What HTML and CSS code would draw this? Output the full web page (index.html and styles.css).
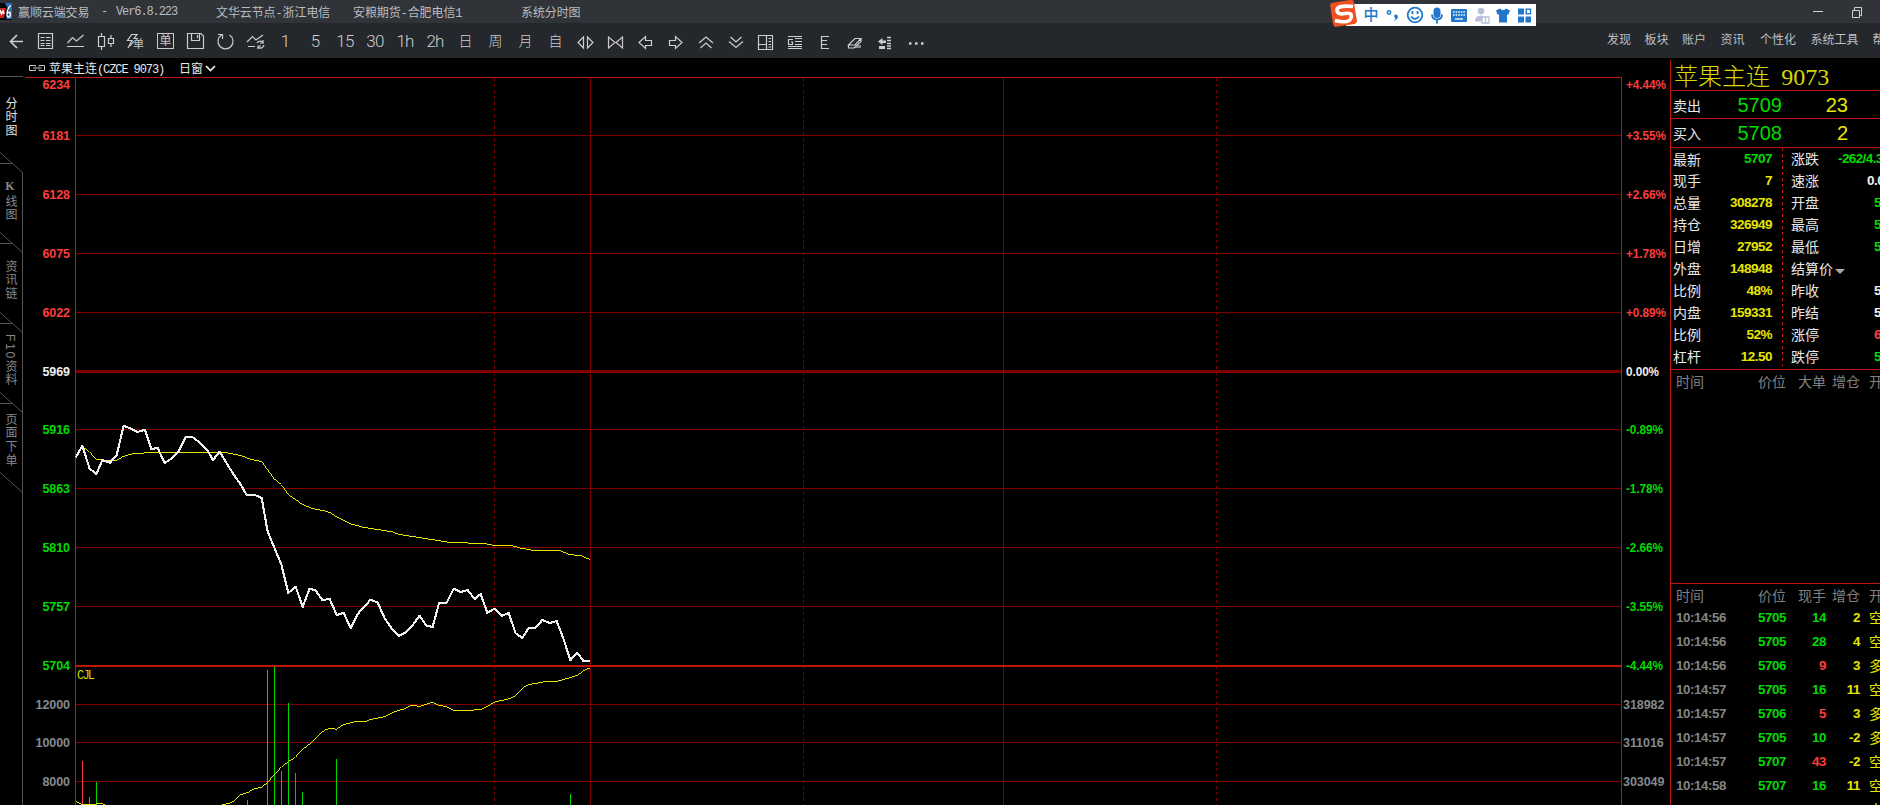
FILE: index.html
```html
<!DOCTYPE html>
<html lang="zh-CN">
<head>
<meta charset="utf-8">
<title>赢顺云端交易</title>
<link rel="stylesheet" href="styles.css">
</head>
<body>
<div class="app">
  <header class="titlebar">
    <svg class="app-logo" width="12" height="17" viewBox="0 0 12 17"><rect width="12" height="17" fill="#05070b"/><path d="M5 0H12V16H6L9 8Z" fill="#2d6db5"/><path d="M0 5H6L4 15H0Z" fill="#c9232c"/><path d="M0 7L1.500 11L3 8L4 11M10.500 2.500Q7 6 7 11.500Q7 14.500 9 14T10 9.500Q8 8.500 7 11" fill="none" stroke="#fff" stroke-width="1.400"/></svg>
    <span class="t-app">赢顺云端交易</span>
    <span class="t-dash">-</span>
    <span class="t-ver mono">Ver6.8.223</span>
    <span class="t-node">文华云节点-浙江电信</span>
    <span class="t-broker">安粮期货-合肥电信1</span>
    <span class="t-page">系统分时图</span>
    <svg class="win-buttons" width="60" height="23" viewBox="1810 0 60 23"><path d="M1813 11.500H1823M1852.500 10.500H1859.500V17.500H1852.500ZM1854.500 10V7.500H1861.500V15.500H1860" fill="none" stroke="#d0d0d0"/></svg>
  </header>

  <nav class="toolbar">
    <svg class="ico" viewBox="0 0 30 35"><path d="M23 18.500H10.500M17 12L10.500 18.500L17 25" stroke-width="1.700"/></svg>
    <svg class="ico" viewBox="0 0 30 35"><path d="M8.500 10.500H22.500V25.500H8.500ZM10.500 14.500H14.500M16 14.500H20.500M10.500 17.500H14.500M16 17.500H20.500M10.500 20.500H14.500M16 20.500H20.500M10.500 22.500H14.500M16 22.500H20.500"/></svg>
    <svg class="ico" viewBox="0 0 30 35"><path d="M7.500 20L12.500 14.500L16.500 18L23.500 12M7 23.500H24"/></svg>
    <svg class="ico" viewBox="0 0 30 35"><path d="M8.500 13.500H14.500V23.500H8.500ZM11.500 10V13M11.500 24V27M18.500 15.500H23.500V20.500H18.500ZM21 12V15M21 21V24"/></svg>
    <div class="ico combo"><svg viewBox="0 0 30 35"><path d="M11 11.500H17L14 15.500H18M12 11L7.500 17.500H12L8 25M14 18L10 23"/></svg><span>单</span></div>
    <div class="ico boxed"><span>单</span></div>
    <svg class="ico" viewBox="0 0 30 35"><path d="M7.500 10.500H21L23.500 13V25.500H7.500ZM11.500 11V17.500H19.500V11M17.500 12V15"/></svg>
    <svg class="ico" viewBox="0 0 30 35"><path d="M19.500 12A7.500 7.500 0 1 1 11.500 12M8 11.500H12.500V16"/></svg>
    <svg class="ico" viewBox="0 0 30 35"><path d="M7 19L12.500 13.500L16 17L23 12M8 23.500H15M17 20A3.500 3.500 0 0 1 23 19.500V17M24 22A3.500 3.500 0 0 1 18 24V26M20 20H23M18 23H21"/></svg>
    <span class="per">1</span><span class="per">5</span><span class="per">15</span><span class="per">30</span><span class="per">1h</span><span class="per">2h</span>
    <span class="per cn">日</span><span class="per cn">周</span><span class="per cn">月</span><span class="per cn">自</span>
    <svg class="ico" viewBox="0 0 30 35"><path d="M13.500 14V25L8 19.500ZM17.500 14V25L23 19.500Z"/></svg>
    <svg class="ico" viewBox="0 0 30 35"><path d="M8.500 14V25L15 19.500ZM22.500 14V25L16 19.500Z"/></svg>
    <svg class="ico" viewBox="0 0 30 35"><path d="M9 19.500L15.500 13.500V17.500H21.500V22.500H15.500V25.500Z"/></svg>
    <svg class="ico" viewBox="0 0 30 35"><path d="M22 19.500L15.500 13.500V17.500H9.500V22.500H15.500V25.500Z"/></svg>
    <svg class="ico" viewBox="0 0 30 35"><path d="M9 20L16 14L23 20M10.500 25L16 20L21.500 25"/></svg>
    <svg class="ico" viewBox="0 0 30 35"><path d="M10.500 14L16 19L21.500 14M9 18.500L16 24.500L23 18.500"/></svg>
    <svg class="ico" viewBox="0 0 30 35"><path d="M8.500 12.500H22.500V26.500H8.500ZM16.500 13V26M9 21.500H16M18.500 15.500H21M18.500 18.500H21M18.500 21.500H21M18.500 24H21"/></svg>
    <svg class="ico" viewBox="0 0 30 35"><path d="M8 13.500H22M15 15.500H22M15 18.500H22M15 21.500H22M8 23.500H22M8 25.500H22M13 16.500H8.500V21.500H12.500V19H11"/></svg>
    <svg class="ico" viewBox="0 0 30 35"><path d="M19 13.500H11.500V25.500H19M12 17.500H17M12 21.500H17"/></svg>
    <svg class="ico" viewBox="0 0 30 35"><path d="M16 22H21V25H14Z" fill="#888" stroke="none"/><path d="M8.500 22L15 15.500H21L15 22ZM8.500 22V25H14L21 18.500V15.500"/></svg>
    <svg class="ico" viewBox="0 0 30 35"><path d="M8 18.500L12.500 15V17.500H16V20H12.500V22ZM9 23H15V26H9Z" fill="#ccc" stroke="none"/><path d="M17 14.500H21M17 17.500H21M17 20.500H21M17 23H21M17 25.500H21" stroke-width="1.600"/></svg>
    <svg class="ico" viewBox="0 0 30 35"><path d="M9 20.500H11.500M15 20.500H17.500M21 20.500H23.500" stroke-width="2.300"/></svg>
    <div class="menu">
      <span class="m1">发现</span><span class="m2">板块</span><span class="m3">账户</span><span class="m4">资讯</span><span class="m5">个性化</span><span class="m6">系统工具</span><span>帮</span>
    </div>
  </nav>

  <div class="main">
    <aside class="sidebar">
      <svg class="tab-lines" width="25" height="747" viewBox="0 58 25 747"><path d="M0 76.500H23M22.500 172.500V805M0 152.500L22.500 172.500M0 163.500H12M0 232.500L22.500 252.500M0 243.500H12M0 312.500L22.500 332.500M0 323.500H12M0 392.500L22.500 412.500M0 403.500H12M0 472.500L22.500 492.500"/></svg>
      <div class="tab first">分时图</div>
      <div class="tab"><span class="up">K</span>线图</div>
      <div class="tab">资讯链</div>
      <div class="tab">F10资料</div>
      <div class="tab">页面下单</div>
    </aside>

    <section class="chart">
      <div class="chart-head">
        <svg width="17" height="9" viewBox="0 0 17 9"><path d="M6.500 3.500V2.500H.5V7.500H6.500V6.500M10 3.500V2.500H15.500V7.500H10V6.500M4 5H12.500" fill="none" stroke="#ccc"/></svg>
        <span class="inst">苹果主连<span class="mono">(CZCE 9073)</span></span>
        <span>日窗</span>
        <svg width="12" height="8" viewBox="0 0 12 8"><path d="M1 2L5.500 6.500L10 2" fill="none" stroke="#eee" stroke-width="1.700"/></svg>
      </div>
      <svg class="plot" width="1645" height="728" viewBox="25 77 1645 728">
        <g class="grid">
          <path d="M76 135.500H1621M76 194.500H1621M76 253.500H1621M76 312.500H1621M76 429.500H1621M76 488.500H1621M76 547.500H1621M76 606.500H1621M76 704.500H1621M76 742.500H1621M76 781.500H1621M590.500 78V805M1003.500 78V805"/>
          <path class="thick" d="M76 371.500H1621"/>
          <path class="dash" d="M494.500 78V805M803.500 78V805M1216.500 78V805"/>
        </g>
        <path class="frame" d="M25 77.500H1622M75.500 77V805M1621.500 77V805"/>
        <path class="split" d="M76 666H1621"/>
        <path class="down" d="M89.500 797V805M96.500 782V805M247.500 800V805M267.500 670V805M274.500 667V805M281.500 771V805M288.500 703V805M302.500 792V805M336.500 759V805M570.500 794V805"/>
        <path class="up-bar" d="M82.500 761V805M295.500 773V805"/>
        <g class="avg">
          <polyline transform="translate(60 400) scale(.33333)" points="67,140 88,155 109,178 130,181 170,181 191,169 215,162 265,158 500,158 545,167 565,176 605,185 622,208 643,237 664,254 685,284 727,313 755,325 800,334 810,338 830,351 840,356"/>
          <polyline transform="translate(340 480) scale(.33333)" points="0,116 11,121 30,131 70,142 155,155 175,163 240,173 335,188 430,190 460,196 515,197 545,205 580,211 660,212 688,223 725,228 751,239"/>
          <polyline transform="translate(0 640) scale(.33333)" points="227,484 245,493 257,494 280,493 305,490 315,495 340,505 640,505 670,493 685,491 703,482 722,464 742,458 765,446 785,441 803,427 822,405 845,380 868,363 886,352 905,330 930,311 955,286 975,270 992,265 1010,268 1020,260 1030,254 1065,245 1080,244"/>
          <polyline transform="translate(340 640) scale(.33333)" points="60,244 77,244 90,239 130,231 170,213 195,206 215,196 240,199 258,193 278,187 295,196 320,200 340,211 390,211 425,208 465,186 505,177 525,168 547,145 565,134 615,125 655,123 710,107 732,92 751,83"/>
        </g>
        <g class="price">
          <polyline transform="translate(60 400) scale(.33333)" points="47,172 67,138 89,206 109,222 127,180 150,188 170,165 191,77 212,86 232,96 255,89 274,147 293,144 314,189 335,175 356,153 377,111 398,112 419,127 440,148 459,180 479,155 500,190 520,222 541,252 560,285 585,285 605,294 623,395 643,443 664,493 685,579 707,560 728,621 748,567 766,570 787,600 809,597 830,645 851,638"/>
          <polyline transform="translate(340 480) scale(.33333)" points="-10,405 11,399 32,444 53,402 92,359 113,368 134,415 155,445 176,468 197,457 219,434 239,407 258,436 278,441 297,370 320,368 341,326 362,336 383,330 404,357 422,342 442,399 463,386 485,408 506,399 527,460 547,474 566,444 587,443 607,420 629,429 650,423 671,478 691,541 712,518 730,543 751,543"/>
        </g>
        <text class="cjl" x="77" y="679" textLength="18">CJL</text>
        <g class="axis left">
          <g class="red"><text x="70" y="89">6234</text><text x="70" y="140">6181</text><text x="70" y="199">6128</text><text x="70" y="258">6075</text><text x="70" y="317">6022</text></g>
          <text class="white" x="70" y="376">5969</text>
          <g class="green"><text x="70" y="434">5916</text><text x="70" y="493">5863</text><text x="70" y="552">5810</text><text x="70" y="611">5757</text><text x="70" y="670">5704</text></g>
          <g class="gray"><text x="70" y="709">12000</text><text x="70" y="747">10000</text><text x="70" y="786">8000</text></g>
        </g>
        <g class="axis">
          <g class="red"><text x="1626" y="89" textLength="40" lengthAdjust="spacingAndGlyphs">+4.44%</text><text x="1626" y="140" textLength="40" lengthAdjust="spacingAndGlyphs">+3.55%</text><text x="1626" y="199" textLength="40" lengthAdjust="spacingAndGlyphs">+2.66%</text><text x="1626" y="258" textLength="40" lengthAdjust="spacingAndGlyphs">+1.78%</text><text x="1626" y="317" textLength="40" lengthAdjust="spacingAndGlyphs">+0.89%</text></g>
          <text class="white" x="1626" y="376" textLength="33" lengthAdjust="spacingAndGlyphs">0.00%</text>
          <g class="green"><text x="1626" y="434" textLength="37" lengthAdjust="spacingAndGlyphs">-0.89%</text><text x="1626" y="493" textLength="37" lengthAdjust="spacingAndGlyphs">-1.78%</text><text x="1626" y="552" textLength="37" lengthAdjust="spacingAndGlyphs">-2.66%</text><text x="1626" y="611" textLength="37" lengthAdjust="spacingAndGlyphs">-3.55%</text><text x="1626" y="670" textLength="37" lengthAdjust="spacingAndGlyphs">-4.44%</text></g>
          <g class="gray"><text x="1623" y="709">318982</text><text x="1623" y="747">311016</text><text x="1623" y="786">303049</text></g>
        </g>
      </svg>
    </section>

    <aside class="quote">
      <h1>苹果主连 <span>9073</span></h1>
      <div class="book"><span>卖出</span><b class="green">5709</b><b class="yellow">23</b></div>
      <div class="book"><span>买入</span><b class="green">5708</b><b class="yellow">2</b></div>
      <div class="stats">
        <div class="col a">
          <div class="newest"><span>最新</span><b class="green">5707</b></div>
          <div><span>现手</span><b>7</b></div>
          <div><span>总量</span><b>308278</b></div>
          <div><span>持仓</span><b>326949</b></div>
          <div><span>日增</span><b>27952</b></div>
          <div><span>外盘</span><b>148948</b></div>
          <div><span>比例</span><b>48%</b></div>
          <div><span>内盘</span><b>159331</b></div>
          <div><span>比例</span><b>52%</b></div>
          <div><span>杠杆</span><b>12.50</b></div>
        </div>
        <div class="col b">
          <div class="wide"><span>涨跌</span><b class="green">-262/4.3</b></div>
          <div class="mid"><span>速涨</span><b class="white">0.0</b></div>
          <div><span>开盘</span><b class="green">5</b></div>
          <div><span>最高</span><b class="green">5</b></div>
          <div><span>最低</span><b class="green">5</b></div>
          <div><span>结算价</span><i class="caret"></i></div>
          <div><span>昨收</span><b class="white">5</b></div>
          <div><span>昨结</span><b class="white">5</b></div>
          <div><span>涨停</span><b class="red">6</b></div>
          <div><span>跌停</span><b class="green">5</b></div>
        </div>
      </div>
      <div class="big-orders"><div class="row head"><span>时间</span><span>价位</span><span>大单</span><span>增仓</span><span>开</span></div></div>
      <div class="ticks">
        <div class="row head"><span>时间</span><span>价位</span><span>现手</span><span>增仓</span><span>开</span></div>
        <div class="row"><span>10:14:56</span><span>5705</span><span>14</span><span>2</span><span>空</span></div>
        <div class="row"><span>10:14:56</span><span>5705</span><span>28</span><span>4</span><span>空</span></div>
        <div class="row"><span>10:14:56</span><span>5706</span><span class="red">9</span><span>3</span><span>多</span></div>
        <div class="row"><span>10:14:57</span><span>5705</span><span>16</span><span>11</span><span>空</span></div>
        <div class="row"><span>10:14:57</span><span>5706</span><span class="red">5</span><span>3</span><span>多</span></div>
        <div class="row"><span>10:14:57</span><span>5705</span><span>10</span><span>-2</span><span>多</span></div>
        <div class="row"><span>10:14:57</span><span>5707</span><span class="red">43</span><span>-2</span><span>空</span></div>
        <div class="row"><span>10:14:58</span><span>5707</span><span>16</span><span>11</span><span>空</span></div>
        <div class="row"><span>10:14:58</span><span>5707</span><span>5</span><span>4</span><span>空</span></div>
      </div>
    </aside>
  </div>

  <div class="ime">
    <svg width="210" height="32" viewBox="1328 0 210 32">
      <rect x="1346" y="4" width="190" height="22" fill="#fff"/>
      <rect x="1331.500" y="1" width="24" height="24.500" rx="3" transform="rotate(-9 1344 13)" fill="#ef5020"/>
      <path d="M1353 6.500Q1337 5 1337 10T1345 13.500T1351 18T1335 20.500" fill="none" stroke="#fff" stroke-width="3.600"/>
      <g transform="translate(0 -1.500)">
      <g fill="none" stroke="#2077cc" stroke-width="1.800">
        <circle cx="1389" cy="14" r="1.700" stroke-width="1.500"/>
        <circle cx="1415" cy="16.500" r="7.300"/><path d="M1411 18Q1415 23 1419 18M1412.500 12.500V15.500M1417.500 12.500V15.500"/>
        <path d="M1432 16Q1432 21 1437 21T1442 16M1437 21V25"/>
      </g>
      <g fill="#2077cc">
        <path d="M1395 16Q1399 16 1397.500 20L1394 22.500L1395.500 19.500Q1393 18 1395 16Z"/>
        <rect x="1433.500" y="9" width="7" height="10.500" rx="3.500"/>
        <rect x="1451" y="10.500" width="16" height="13" rx="1"/>
        <path d="M1496 12L1500 10Q1503 13 1506 10L1510 12L1508.500 16H1507V24H1499V16H1497.500Z"/>
        <path d="M1518 10H1524V16H1518ZM1518 18H1524V24H1518ZM1525.500 18H1531V24H1525.500Z"/>
      </g>
      <rect x="1526.200" y="10.700" width="4.300" height="4.600" fill="none" stroke="#2077cc" stroke-width="1.400"/>
      <path d="M1453 13.500H1465M1453 16.500H1465" stroke="#fff" stroke-width="1.300" stroke-dasharray="1.500 1.100"/><path d="M1455 20.500H1463" stroke="#fff" stroke-width="1.300"/>
      <g fill="#b7c0d6"><circle cx="1481" cy="12.500" r="3.300"/><path d="M1475 23Q1475 17 1481 17H1483V23Z"/></g>
      <path d="M1482 18.500H1485.500V24.500M1482 18.500V24.500H1489V18.500H1485.500" fill="#fff" stroke="#b7c0d6" stroke-width="1.300"/>
      <text x="1363.500" y="21.500" class="ime-cn">中</text>
      </g>
    </svg>
  </div>
</div>
</body>
</html>
```
FILE: styles.css
```css
* { box-sizing: border-box; }
body { margin: 0; background: #000; overflow: hidden; }
.app {
  width: 1880px; height: 805px; overflow: hidden; position: relative;
  display: flex; flex-direction: column;
  font-family: "Liberation Sans", "Noto Sans CJK SC", sans-serif;
  font-size: 12px; color: #c8c8c8;
}
span, b, h1, text { white-space: nowrap; }
.mono { font-family: "Liberation Mono", monospace; font-size: 12px; letter-spacing: -1.1px; }
.red { color: #ff3c3c; fill: #ff3c3c; }
.green { color: #00dc00; fill: #00dc00; }
.yellow { color: #e6e600; }
.white { color: #f0f0f0; fill: #f0f0f0; }
.gray { fill: #848a8e; }

.titlebar { flex: 0 0 23px; height: 23px; background: #303338; display: flex; align-items: center; color: #b9bcc0; }
.titlebar > span { font-family: "Liberation Mono", "Noto Sans CJK SC", monospace; letter-spacing: -.1px; }
.app-logo { align-self: flex-start; margin-top: 3px; }
.t-app { margin-left: 6px; width: 83px; }
.t-dash { width: 15px; }
.titlebar .t-ver { width: 100px; letter-spacing: -1.1px; }
.t-node { width: 137px; }
.t-broker { width: 168px; }
.win-buttons { margin: 0 10px 0 auto; }

.toolbar { flex: 0 0 35px; height: 35px; min-height: 0; background: #24272b; display: flex; }
.ico, .per { flex: 0 0 30px; width: 30px; height: 35px; }
svg.ico, .combo svg { fill: none; stroke: #cdcdcd; stroke-width: 1.2; }
.combo { position: relative; }
.combo span { position: absolute; left: 13px; top: 13px; font-size: 11px; line-height: 16px; }
.boxed { display: flex; align-items: flex-start; justify-content: center; padding: 10px 0 0 1px; }
.boxed span { width: 17px; height: 16px; border: 1px solid #cdcdcd; font-size: 12px; line-height: 14px; text-align: center; }
.per { text-align: center; padding: 2px 0 0 0; font: 300 17px/33px Roboto, "Noto Sans CJK SC", sans-serif; letter-spacing: -.8px; color: #cdcdcd; }
.per.cn { font-size: 14px; line-height: 33px; }
.menu { display: flex; margin-left: auto; width: 273px; height: 35px; padding-top: 1px; line-height: 33px; overflow: hidden; color: #bdbfc1; }
.menu span { flex: none; }
.m1, .m2 { width: 37.5px; }
.m3 { width: 38.5px; }
.m4 { width: 39.5px; }
.m5 { width: 50.5px; }
.m6 { width: 62px; }

.main { flex: 0 0 747px; height: 747px; display: flex; min-height: 0; }
.sidebar { flex: 0 0 25px; position: relative; padding-top: 18px; }
.tab-lines { position: absolute; left: 0; top: 0; fill: none; stroke: #555; }
.tab { height: 80px; width: 19px; padding-bottom: 4px; display: flex; align-items: center; justify-content: center; writing-mode: vertical-rl; color: #888; letter-spacing: 1.8px; line-height: 19px; }
.tab.first { height: 87px; color: #e0e0e0; }
.up { text-orientation: upright; font-family: "Liberation Serif", serif; font-weight: bold; }

.chart { flex: 0 0 1645px; display: flex; flex-direction: column; }
.chart-head { flex: 0 0 19px; height: 19px; display: flex; align-items: center; padding-left: 4px; color: #e8e8e8; }
.chart-head .inst { margin-left: 3px; width: 130px; }
.chart-head svg:last-child { margin-left: 2px; }
.plot { display: block; flex: none; }
.plot path { fill: none; }
.plot path, .plot polyline { shape-rendering: crispEdges; }
.grid { stroke: #800000; }
.grid .thick { stroke-width: 3; }
.grid .dash { stroke-dasharray: 3 3; }
.frame { stroke: #c01608; }
.plot .split { stroke: #c01608; stroke-width: 2; }
.down { stroke: #00d800; }
.up-bar { stroke: #ff3c3c; }
.avg { fill: none; stroke: #e6e600; stroke-width: 3; }
.price { fill: none; stroke: #f0f0f0; stroke-width: 6.3; stroke-linejoin: round; }
.cjl { font: 12px "Liberation Mono", monospace; fill: #d8d800; }
.axis { font: bold 12.5px "Liberation Sans", sans-serif; letter-spacing: -.05px; }
.axis.left { text-anchor: end; }

.quote { flex: 0 0 210px; margin-top: 2px; border-left: 1px solid #c01608; overflow: hidden; display: flex; flex-direction: column; }
.quote h1 { margin: 0; flex: 0 0 31px; height: 31px; min-height: 0; padding-left: 3px; font: 300 24px/29px "Noto Sans CJK SC", sans-serif; color: #d8d800; border-bottom: 1px solid #c01608; }
.quote h1 span { font: 24px/24px "Liberation Serif", serif; margin-left: 6px; }
.book { flex: 0 0 28px; height: 28px; display: flex; align-items: center; border-bottom: 1px solid #c01608; padding-left: 2px; font-size: 14px; color: #e8e8e8; }
.book + .book { flex-basis: 29px; }
.book b { font: 20px "Liberation Sans", sans-serif; text-align: right; padding-top: 1px; }
.book span { width: 28px; }
.book .green { width: 81px; }
.book .yellow { width: 66px; }
.stats { flex: 0 0 222px; display: flex; border-bottom: 1px solid #c01608; }
.col > div { height: 22px; display: flex; align-items: center; line-height: 20px; }
.col span { font-size: 14px; color: #e8e8e8; }
.col b { font-size: 13.5px; letter-spacing: -.5px; color: #e6e600; }
.col b.green { color: #00dc00; }
.col b.white { color: #f0f0f0; }
.col b.red { color: #ff3c3c; }
.col.a { flex: 0 0 112px; padding: 0 11px 0 2px; height: 218px; background: repeating-linear-gradient(#c01608 0 3px, transparent 3px 6px) right / 1px 100% no-repeat; }
.col.a > div { justify-content: space-between; }
.col.a .newest span { padding-top: 2px; }
.col.b { padding-left: 8px; width: 97px; flex: none; }
.col.b span { flex: none; }
.col.b b { margin-left: 55px; }
.col.b .wide b { margin-left: 19px; letter-spacing: -.6px; }
.col.b .mid b { margin-left: 48px; }
.caret { border: 5px solid transparent; border-top-color: #aaa; border-bottom: 0; margin: 5px 0 0 2px; }
.big-orders { flex: 0 0 214px; border-bottom: 1px solid #c01608; }
.row { display: flex; height: 24px; align-items: center; font-size: 13.3px; font-weight: bold; letter-spacing: -.4px; color: #e6e600; }
.row span { flex: none; text-align: right; }
.row span:nth-child(1) { width: 58px; padding-left: 5px; text-align: left; color: #848484; }
.row span:nth-child(2) { width: 57px; color: #00dc00; }
.row span:nth-child(3) { width: 40px; color: #00dc00; }
.row span:nth-child(3).red { color: #ff3c3c; }
.row span:nth-child(4) { width: 34px; }
.row span:nth-child(5) { margin-left: 9px; font-size: 14px; font-weight: normal; letter-spacing: 0; }
.row.head { height: 22px; font-size: 14px; font-weight: normal; letter-spacing: 0; }
.row.head span:nth-child(n) { color: #808080; }
.ticks .head { height: 21px; }

.ime { position: absolute; left: 1328px; top: 0; height: 32px; }
.ime-cn { font: 500 15px "Noto Sans CJK SC", sans-serif; fill: #2077cc; }
```
